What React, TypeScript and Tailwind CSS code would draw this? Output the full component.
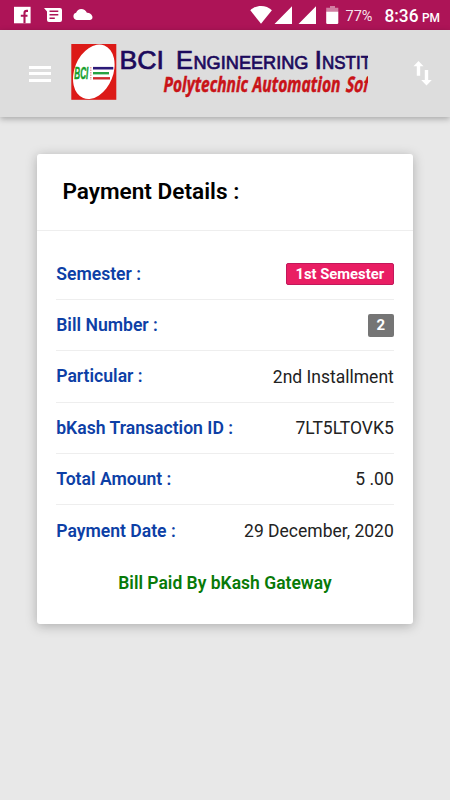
import type { ReactNode } from "react";

type DetailRowProps = {
  label: string;
  children: ReactNode;
  last?: boolean;
};

type FitTextProps = {
  x: number;
  size: number;
  length: number;
  children: string;
};

const StatusBar = () => (
  <div className="h-[30px] bg-[#ad1457] text-white">
    <svg width="450" height="30" viewBox="0 0 450 30" fill="#fff">
      <path d="M14 6.8h16.6v16.5H14z" />
      <path d="M28 10.9h-1.4q-2.1 0-2.1 2.1v10.3M20.8 15.8h6.7" fill="none" stroke="#ad1457" strokeWidth="2.1" />
      <path d="M44 8h16q2 0 2 2v10q0 2-2 2H49q-2 0-2-2v-8.5z" />
      <path d="M49.5 11.2h8.8M49.5 14.8h8.8M49.5 18.3h5.3" stroke="#ad1457" strokeWidth="1.4" />
      <path d="M76.5 20a3.7 3.7 0 0 1-.4-7.2c.9-2.2 2.8-3.9 5.1-3.9 2.5 0 4.8 1.5 5.7 3.9 2.8-.1 4.4 1.2 5.5 3.6.5 2-.8 3.6-2.7 3.6z" />
      <path d="M250.3 10.3c5.5-5.7 16-5.7 21.6 0L261 23.7z" />
      <path d="M292 6.2V24h-17.5zM316 6.2V24h-17.5z" />
      <path d="M330 6h5v1.7h3.3v4.2h-12.1V7.7h3.8z" opacity=".45" />
      <path d="M326.2 11.8h12.1v11q0 1.2-1.2 1.2h-9.7q-1.2 0-1.2-1.2z" />
      <g fontFamily="Roboto, sans-serif">
        <text x="345.5" y="21" fontSize="15" textLength="27" lengthAdjust="spacingAndGlyphs" fillOpacity=".9">77%</text>
        <text x="384.5" y="22" fontSize="18.5" fontWeight="500" textLength="34" lengthAdjust="spacingAndGlyphs">8:36</text>
        <text x="422" y="22" fontSize="12.5" fontWeight="500" textLength="18" lengthAdjust="spacingAndGlyphs">PM</text>
      </g>
    </svg>
  </div>
);

const TitleText = ({ x, size, length, children }: FitTextProps) => (
  <text
    x={x}
    y="68.7"
    fontSize={size}
    textLength={length}
    lengthAdjust="spacingAndGlyphs"
    fill="#1c0a5c"
    stroke="#1c0a5c"
    strokeWidth=".7"
    fontFamily="Liberation Sans, sans-serif"
  >
    {children}
  </text>
);

const TaglineText = ({ x, size, length, children }: FitTextProps) => (
  <text
    x={x}
    y="92"
    fontSize={size}
    textLength={length}
    lengthAdjust="spacingAndGlyphs"
    fontStyle="italic"
  >
    {children}
  </text>
);

const Logo = () => (
  <svg width="298" height="64" viewBox="70 40 298 64" className="overflow-hidden">
    <rect x="71.3" y="44" width="45" height="55.8" fill="#dc1a17" />
    <ellipse cx="0" cy="0" rx="19.3" ry="28.3" fill="#fff" transform="translate(93.8 71.8) rotate(22)" />
    <text
      x="74.3"
      y="79"
      fontSize="16.5"
      fontWeight="700"
      fontStyle="italic"
      textLength="14"
      lengthAdjust="spacingAndGlyphs"
      fill="#16a02c"
      stroke="#16a02c"
      strokeWidth=".5"
      fontFamily="Liberation Sans, sans-serif"
    >
      BCI
    </text>
    <path d="M90.8 67v13" stroke="#e58a8a" strokeWidth="1.2" strokeDasharray="1.5 1" />
    <path d="M93 68.2h20.3" stroke="#2c1a78" strokeWidth="2.6" />
    <path d="M93 73.2h16" stroke="#27a243" strokeWidth="2.4" />
    <path d="M93 78.3h17" stroke="#cf2a2e" strokeWidth="2.4" />
    <g strokeWidth="1.1">
      <TitleText x={119.5} size={25.5} length={44.5}>BCI</TitleText>
    </g>
    <TitleText x={176} size={25} length={17}>E</TitleText>
    <TitleText x={193.5} size={19} length={115}>NGINEERING</TitleText>
    <TitleText x={314.5} size={25.5} length={7.5}>I</TitleText>
    <TitleText x={322} size={19} length={49}>NSTIT</TitleText>
    <g fill="#c91318" stroke="#c91318" strokeWidth=".5" fontWeight="700" fontFamily="Open Sans, sans-serif">
      <TaglineText x={163.5} size={21.5} length={84.5}>Polytechnic</TaglineText>
      <TaglineText x={252.5} size={21.5} length={88}>Automation</TaglineText>
      {/* slanted upright letters, so the f stays on the baseline */}
      <text
        transform="translate(345 92) skewX(-12)"
        fontSize="21.5"
        textLength="22.5"
        lengthAdjust="spacingAndGlyphs"
      >
        Sof
      </text>
    </g>
  </svg>
);

const Header = () => (
  <header className="flex h-[87px] items-start bg-[#dddddd] pt-2.5 shadow-[0_2px_6px_rgba(0,0,0,0.28)]">
    <div className="mt-[25.5px] ml-[29px] flex w-[41px] flex-col gap-[3.5px]">
      <span className="h-[3px] w-[22px] bg-white" />
      <span className="h-[3px] w-[22px] bg-white" />
      <span className="h-[3px] w-[22px] bg-white" />
    </div>
    <Logo />
    <svg className="mt-5 ml-[45px]" width="20" height="28" viewBox="413 60 20 28" fill="#fff">
      <path d="M418.5 61l5 5.3h-3.3v9.5h-3.4v-9.5h-3.3zM424.8 70h3.4v10h3.6l-5.3 5.4-5.3-5.4h3.6z" />
    </svg>
  </header>
);

const DetailRow = ({ label, children, last }: DetailRowProps) => (
  <div
    className={`flex h-[51.3px] items-center justify-between text-[17.5px] ${
      last ? "" : "border-b-[1.5px] border-[#eeeeee]"
    }`}
  >
    <span className="text-[17.6px] font-semibold whitespace-nowrap text-[#0d3fa6]">{label}</span>
    {children}
  </div>
);

export default function App() {
  return (
    <div className="min-h-[800px] w-[450px] overflow-hidden bg-[#e8e8e8] font-[Roboto,sans-serif]">
      <StatusBar />
      <Header />
      <main className="mt-[37px] ml-[37.4px] h-[470.4px] w-[375.2px] rounded-[3px] bg-white shadow-[0_2px_12px_rgba(0,0,0,0.26)]">
        <div className="flex h-[76.5px] items-center border-b-[1.5px] border-[#eeeeee] pl-[25px]">
          <h1 className="text-[22.6px] font-semibold text-black">Payment Details :</h1>
        </div>
        <section className="px-[18.8px] pt-[18.4px] text-[#222222]">
          <DetailRow label="Semester :">
            <span className="flex h-[22.5px] w-[108px] items-center justify-center rounded-[2px] border border-[#c2185b] bg-[#e91e63] text-[14.8px] font-bold text-white">
              1st Semester
            </span>
          </DetailRow>
          <DetailRow label="Bill Number :">
            <span className="flex h-[22.5px] w-[26px] items-center justify-center rounded-[2px] bg-[#757575] text-[15px] font-bold text-white">
              2
            </span>
          </DetailRow>
          <DetailRow label="Particular :">
            <span>2nd Installment</span>
          </DetailRow>
          <DetailRow label="bKash Transaction ID :">
            <span>7LT5LTOVK5</span>
          </DetailRow>
          <DetailRow label="Total Amount :">
            <span>5 .00</span>
          </DetailRow>
          <DetailRow label="Payment Date :" last>
            <span>29 December, 2020</span>
          </DetailRow>
          <p className="mt-[13.7px] text-center text-[17.5px] font-semibold text-[#087a08]">
            Bill Paid By bKash Gateway
          </p>
        </section>
      </main>
    </div>
  );
}
